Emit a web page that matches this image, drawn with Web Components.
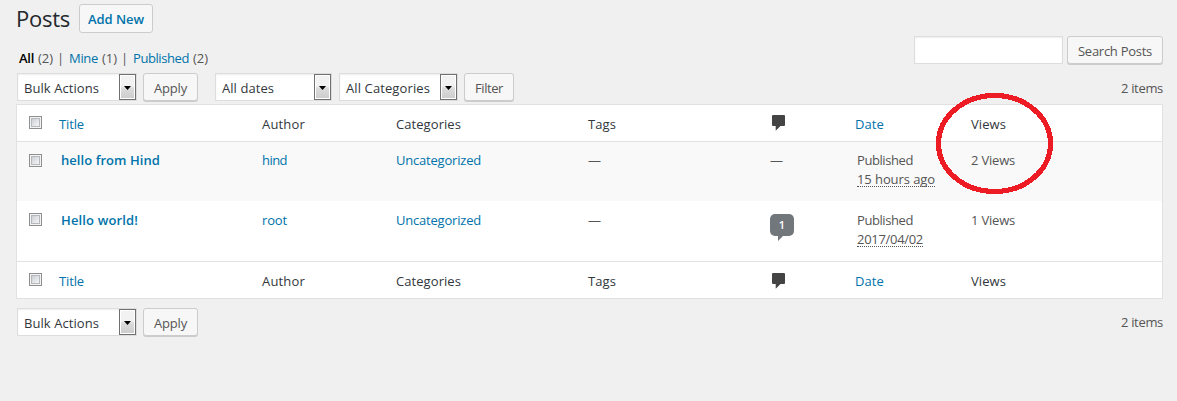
<!DOCTYPE html>
<html lang="en">
<head>
<meta charset="utf-8">
<title>Posts</title>
<style>
html,body{margin:0;height:100%;background:#f0f0f0;overflow:hidden}
body{font:13px/19px "Open Sans","Noto Sans",sans-serif;color:#555}
</style>
</head>
<body>
<posts-page></posts-page>
<script>
const define = (name, html, init) => {
  const tpl = document.createElement('template');
  tpl.innerHTML = html;
  customElements.define(name, class extends HTMLElement {
    connectedCallback() {
      if (this.shadowRoot) return;
      this.attachShadow({mode: 'open'}).append(tpl.content.cloneNode(true));
      if (init) init(this, this.shadowRoot);
    }
  });
};

/* Label whose tracking is adjusted so that it spans the width in "w" */
define('fit-text', `
<style>:host{display:block;flex:none}span{display:block;width:max-content;white-space:pre}</style>
<span><slot></slot></span>`, (el, root) => {
  const w = +el.getAttribute('w');
  if (!w) return;
  const s = root.querySelector('span');
  const n = el.textContent.length;
  const fit = (w - s.getBoundingClientRect().width) / n;
  s.style.letterSpacing = fit.toFixed(3) + 'px';
  el.style.width = w + 'px';
});

define('wp-button', `
<style>
:host{display:flex;box-sizing:border-box;height:29px;border:1px solid #ccc;border-radius:3px;background:#f7f7f7;
box-shadow:0 1px 0 #ccc;color:#555;justify-content:center;line-height:19px;padding-top:5px;flex:none}
:host([short]){height:28px}
:host([plain]){box-shadow:none}
</style><slot></slot>`);

define('wp-select', `
<style>
:host{display:flex;box-sizing:border-box;height:28px;border:1px solid #ddd;background:#fff;color:#32373c;
box-shadow:inset 0 1px 2px rgba(0,0,0,.07);justify-content:space-between;flex:none}
.t{padding:5px 0 0 6px}
.a{box-sizing:border-box;width:17px;height:26px;border:1px solid #707070;padding:1px;background:#fff}
.b{height:22px;background:linear-gradient(#f2f2f2 0 45%,#dcdcdc 55%,#cdcdcd)}
svg{display:block}
</style>
<div class="t"><slot></slot></div>
<div class="a"><div class="b"><svg width="13" height="22"><path d="M3 10h7l-3.5 4z" fill="#000"/></svg></div></div>`);

define('wp-check', `
<style>
:host{display:block;box-sizing:border-box;width:13px;height:13px;border:1px solid #8e8f8f;background:#f4f4f4;padding:1px}
i{display:block;box-sizing:border-box;width:9px;height:9px;border:1px solid #b5b9be;background:linear-gradient(135deg,#cbcfd5,#f6f6f6)}
</style><i></i>`);

define('comment-icon', `
<style>:host{display:block;height:17px}svg{display:block}</style>
<svg width="16" height="17"><path d="M2.700 0H14.300L15 .7V10.300L14.300 11H10.500L5.700 15.800V11H2.700L2 10.300V.7z" fill="#444"/></svg>`);

define('comment-count', `
<style>
:host{display:block;width:24px}
b{display:block;height:22px;border-radius:5px;background:#72777c;color:#fff;font:600 11px/22px "Open Sans",sans-serif;text-align:center}
svg{display:block;margin-left:8px}
</style><b><slot></slot></b><svg width="5" height="5"><path d="M0 0H5L0 5z" fill="#72777c"/></svg>`);

const columns = 'grid-template-columns:42px 203px 134px 192px 182px 85px 116px 1fr';

define('table-heading', `
<style>
:host{display:grid;${columns};height:36px;color:#32373c}
div{padding-top:10px}.l{color:#0073aa}.k{padding:11px 0 0 12px}.c{padding-top:var(--icon-top,10px)}
</style>
<div class="k"><wp-check></wp-check></div>
<div class="l"><fit-text w="25">Title</fit-text></div>
<div><fit-text w="43">Author</fit-text></div>
<div><fit-text w="65">Categories</fit-text></div>
<div><fit-text w="28">Tags</fit-text></div>
<div class="c"><comment-icon></comment-icon></div>
<div class="l"><fit-text w="29">Date</fit-text></div>
<div><fit-text w="35">Views</fit-text></div>`);

define('post-row', `
<style>
:host{display:grid;${columns};height:59px;box-sizing:border-box;color:#555}
:host([alt]){background:#f9f9f9}
div{padding-top:var(--text-top,9px)}.k{padding:12px 0 0 12px}
.l{color:#0073aa}.t{padding-left:2px;font-weight:600}.d{padding-left:2px}
.m{padding-top:var(--badge-top,9px)}
</style>
<div class="k"><wp-check></wp-check></div>
<div class="l t"><slot name="title"></slot></div>
<div class="l"><slot name="author"></slot></div>
<div class="l"><fit-text w="85">Uncategorized</fit-text></div>
<div><fit-text w="13">—</fit-text></div>
<div class="m"><slot name="comments"></slot></div>
<div class="d"><fit-text w="56">Published</fit-text><slot name="date"></slot></div>
<div><slot name="views"></slot></div>`);

define('posts-table', `
<style>
:host{display:block;box-sizing:border-box;width:1147px;border:1px solid #e1e1e1;background:#fff}
table-heading.top{border-bottom:1px solid #e1e1e1}
table-heading.foot{border-top:1px solid #e1e1e1;--icon-top:11px}
.date{height:16px;border-bottom:1px dotted #555}
.second{--badge-top:13px;--text-top:10px;height:60px}
</style>
<table-heading class="top"></table-heading>
<post-row alt>
<fit-text slot="title" w="99">hello from Hind</fit-text>
<fit-text slot="author" w="25">hind</fit-text>
<fit-text slot="comments" w="13">—</fit-text>
<fit-text slot="date" class="date" w="78">15 hours ago</fit-text>
<fit-text slot="views" w="44">2 Views</fit-text>
</post-row>
<post-row class="second">
<fit-text slot="title" w="77">Hello world!</fit-text>
<fit-text slot="author" w="25">root</fit-text>
<comment-count slot="comments">1</comment-count>
<fit-text slot="date" class="date" w="66">2017/04/02</fit-text>
<fit-text slot="views" w="44">1 Views</fit-text>
</post-row>
<table-heading class="foot"></table-heading>`);

define('posts-page', `
<style>
:host{display:block;position:relative;box-sizing:border-box;width:1177px;height:401px;padding:4px 14px 0 16px;background:#f0f0f0}
header{display:flex;height:32px}
h1{margin:0 9px 0 0;font-size:22px;line-height:29px;font-weight:400;color:#23282d;width:54px}
header wp-button{width:74px;color:#0073aa;font-weight:600}
.sub{display:flex;height:37px;justify-content:space-between}
nav{display:flex;padding:13px 0 0 3px;color:#555}
nav b{font-weight:600;color:#000}nav a{color:#0073aa}
nav fit-text.s{margin:0 9px 0 4px}
.g{margin-left:4px}
.search{display:flex;gap:4px}
.box{box-sizing:border-box;width:149px;height:28px;border:1px solid #ddd;background:#fff;box-shadow:inset 0 1px 2px rgba(0,0,0,.07)}
.bar{display:flex;height:31px;padding-left:1px}
.bar wp-button{margin-left:6px}
.count{margin-left:auto;padding-top:6px}
.bottom{margin-top:9px}
.bottom .count{padding-top:5px}
.ring{position:absolute;left:934px;top:91px}
</style>
<header><h1><fit-text w="54">Posts</fit-text></h1><wp-button plain><fit-text w="56">Add New</fit-text></wp-button></header>
<div class="sub">
<nav><b><fit-text w="15">All</fit-text></b><fit-text class="g" w="15">(2)</fit-text><fit-text class="s" w="3">|</fit-text>
<a><fit-text w="29">Mine</fit-text></a><fit-text class="g" w="15">(1)</fit-text><fit-text class="s" w="3">|</fit-text>
<a><fit-text w="56">Published</fit-text></a><fit-text class="g" w="15">(2)</fit-text></nav>
<div class="search"><div class="box"></div><wp-button short style="width:96px"><fit-text w="74">Search Posts</fit-text></wp-button></div>
</div>
<div class="bar">
<wp-select style="width:120px"><fit-text w="75">Bulk Actions</fit-text></wp-select>
<wp-button short style="width:55px"><fit-text w="33">Apply</fit-text></wp-button>
<wp-select style="width:117px;margin-left:17px"><fit-text w="52">All dates</fit-text></wp-select>
<wp-select style="width:119px;margin-left:7px"><fit-text w="84">All Categories</fit-text></wp-select>
<wp-button short style="width:50px"><fit-text w="28">Filter</fit-text></wp-button>
<div class="count"><fit-text w="42">2 items</fit-text></div>
</div>
<posts-table></posts-table>
<div class="bar bottom">
<wp-select style="width:120px"><fit-text w="75">Bulk Actions</fit-text></wp-select>
<wp-button short style="width:55px"><fit-text w="33">Apply</fit-text></wp-button>
<div class="count"><fit-text w="42">2 items</fit-text></div>
</div>
<svg class="ring" width="122" height="106"><ellipse cx="60.5" cy="52.500" rx="56" ry="48" fill="none" stroke="#ed1c24" stroke-width="5.200" shape-rendering="crispEdges"/></svg>`);
</script>
</body>
</html>
